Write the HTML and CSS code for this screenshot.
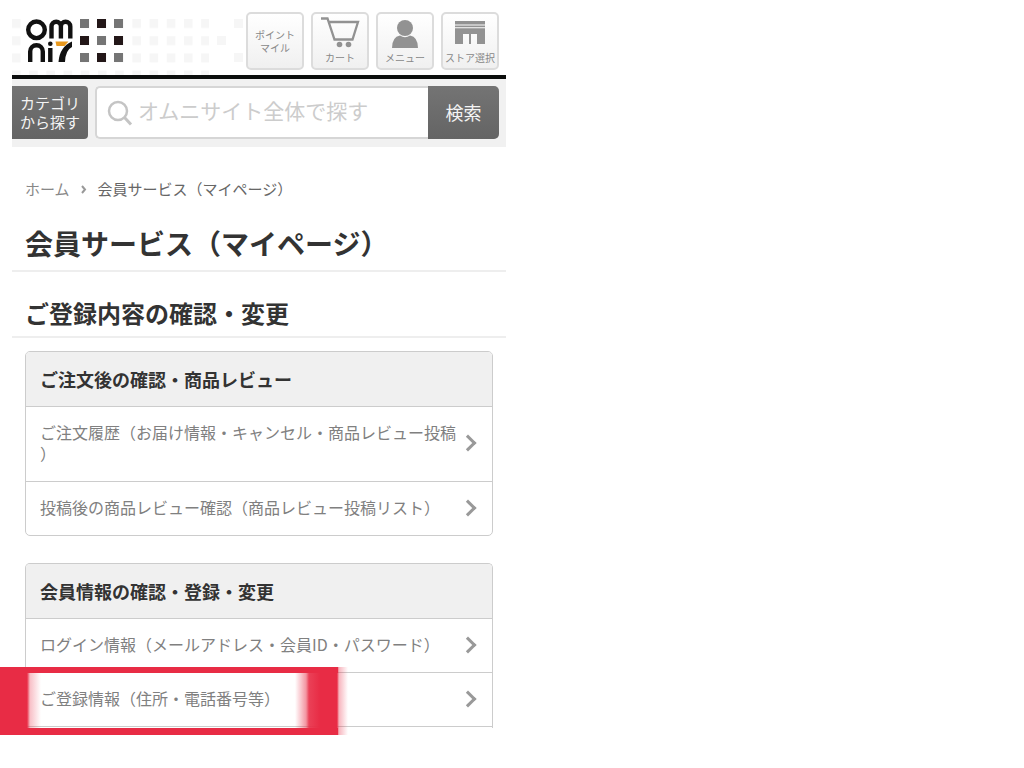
FILE: index.html
```html
<!DOCTYPE html>
<html lang="ja">
<head>
    <meta charset="UTF-8">
    <meta name="viewport" content="width=device-width, initial-scale=1.0">
    <title>会員サービス（マイページ）</title>
    <link rel="stylesheet" href="styles.css">
</head>
<body>
    <div class="page">
        <header class="header">
            <a class="logo" href="#" aria-label="omni7">
                <svg width="234" height="75" viewBox="12 0 234 75">
                    <defs>
                        <pattern id="dots" x="11" y="19" width="17.2" height="17.2" patternUnits="userSpaceOnUse">
                            <rect x="1" width="8.5" height="9" fill="#f6f6f6"/>
                        </pattern>
                    </defs>
                    <!-- tiled background -->
                    <rect x="12" y="19" width="197" height="56" fill="url(#dots)"/>
                    <path d="M217 36h9v9h-9zM234 19h9v9h-9zM234 53h9v9h-9z" fill="#f6f6f6"/>
                    <rect x="25" y="17" width="50" height="47" fill="#fff"/>
                    <path d="M80 19h9v9h-9zM114 19h9v9h-9zM97 36h9v9h-9zM80 53h9v9h-9zM114 53h9v9h-9z" fill="#757575"/>
                    <path d="M97 19h9v9h-9zM80 36h9v9h-9zM114 36h9v9h-9zM97 53h9v9h-9z" fill="#231718"/>
                    <!-- omni7 -->
                    <g fill="none" stroke="#111" stroke-width="4.4">
                        <circle cx="36.5" cy="29.8" r="8.3"/>
                        <path d="M51.5 38.5V26.5a4.700 4.700 0 0 1 9.400 0V38.500M60.900 26.500a4.700 4.700 0 0 1 9.400 0V38.500"/>
                        <path d="M30.200 62V51.500a6.200 6.200 0 0 1 12.600 0V62M50.300 48V62"/>
                    </g>
                    <circle cx="50.300" cy="43.800" r="2.300" fill="#111"/>
                    <path d="M55.500 41.500H68.500L64.500 46H56.500Z" fill="#e8981c"/>
                    <path d="M72 41.500V47Q65.500 50 65 62H58.500Q59.500 47 72 41.500Z" fill="#111"/>
                </svg>
            </a>
            <nav class="tools">
                <a class="tool" href="#"><span>ポイント<br>マイル</span></a>
                <a class="tool tool-icon" href="#">
                    <svg width="44" height="34" viewBox="0 0 44 34" fill="none" stroke="#929292" stroke-width="2.300">
                        <path d="M3 3.500H9.500L16.500 24.500H34.500L40 7H11"/>
                        <circle cx="21.500" cy="29.500" r="2.800" fill="#929292" stroke="none"/>
                        <circle cx="30.500" cy="29.500" r="2.800" fill="#929292" stroke="none"/>
                    </svg>
                    <span>カート</span>
                </a>
                <a class="tool tool-icon" href="#">
                    <svg width="44" height="34" viewBox="0 0 44 34" fill="#929292">
                        <circle cx="22" cy="13" r="8"/>
                        <path d="M9 33Q9 22 17 20.500Q22 24 27 20.500Q35 22 35 33Z"/>
                    </svg>
                    <span>メニュー</span>
                </a>
                <a class="tool tool-icon" href="#">
                    <svg width="44" height="34" viewBox="0 0 44 34" fill="#929292">
                        <path d="M7 6H37V9.500H7zM7 10.500H37V12.300H7zM7 13.300H37V29H29V19H23V29H21V19H15V29H7z"/>
                    </svg>
                    <span>ストア選択</span>
                </a>
            </nav>
        </header>

        <form class="search-bar">
            <button class="category" type="button">カテゴリ<br>から探す</button>
            <div class="search-box">
                <svg class="search-icon" width="26" height="26" viewBox="0 0 26 26" fill="none" stroke="#c4c4c4" stroke-width="2.500">
                    <circle cx="11" cy="11" r="9"/>
                    <path d="M17.500 17.500L24 24.500" stroke-width="3"/>
                </svg>
                <input type="text" class="search-input" aria-label="サイト内検索" placeholder="オムニサイト全体で探す">
                <button class="search-button" type="submit">検索</button>
            </div>
        </form>

        <nav class="breadcrumb">
            <a href="#">ホーム</a>
            <svg width="6" height="9" viewBox="0 0 6 9" fill="none" stroke="#999" stroke-width="2"><path d="M1 1L4 4.500L1 8"/></svg>
            <span>会員サービス（マイページ）</span>
        </nav>

        <main>
            <h1>会員サービス（マイページ）</h1>
            <h2>ご登録内容の確認・変更</h2>

            <section class="card">
                <h3>ご注文後の確認・商品レビュー</h3>
                <ul>
                    <li><a href="#">ご注文履歴（お届け情報・キャンセル・商品レビュー投稿）</a></li>
                    <li><a href="#">投稿後の商品レビュー確認（商品レビュー投稿リスト）</a></li>
                </ul>
            </section>

            <section class="card card-open">
                <h3>会員情報の確認・登録・変更</h3>
                <ul>
                    <li><a href="#">ログイン情報（メールアドレス・会員ID・パスワード）</a></li>
                    <li class="marked"><a href="#">ご登録情報（住所・電話番号等）</a></li>
                </ul>
            </section>
        </main>
    </div>
</body>
</html>
```
FILE: styles.css
```css
* {
    box-sizing: border-box;
}

body {
    font-family: "Noto Sans CJK JP", sans-serif;
    margin: 0;
    padding: 0 0 0 12px;
    background-color: #fff;
    color: #333;
}

a {
    color: inherit;
    text-decoration: none;
}

svg {
    display: block;
}

.page {
    max-width: 494px;
}

.header {
    display: flex;
    justify-content: space-between;
    align-items: flex-start;
    padding-right: 7px;
    border-bottom: 4px solid #0b0d0c;
}

.tools {
    display: flex;
    gap: 7px;
    padding-top: 12px;
}

.tool {
    display: flex;
    flex-direction: column;
    align-items: center;
    justify-content: center;
    width: 58px;
    height: 58px;
    border: 2px solid #dcdcdc;
    border-radius: 5px;
    background: linear-gradient(#fff, #f0f0f0);
    color: #888;
    font-size: 10px;
    line-height: 13px;
    text-align: center;
    white-space: nowrap;
}

.tool-icon {
    justify-content: space-between;
    padding: 1px 0 4px;
}

.search-bar {
    display: flex;
    gap: 7px;
    padding: 7px 7px 8px 0;
    background-color: #f1f1f1;
}

.category,
.search-button {
    border: none;
    background: linear-gradient(#747474, #646464);
    color: #f4f4f4;
    font-family: inherit;
    cursor: pointer;
}

.category {
    width: 76px;
    padding: 0 0 2px;
    border-radius: 0 4px 4px 0;
    font-size: 15px;
    line-height: 19px;
}

.search-box {
    display: flex;
    flex: 1;
    align-items: center;
    height: 53px;
    border: 2px solid #d6d6d6;
    border-right: none;
    border-radius: 5px;
    background-color: #fff;
}

.search-icon {
    flex: none;
    margin-left: 10px;
}

.search-input {
    flex: 1;
    min-width: 0;
    padding: 0 5px 6px;
    border: none;
    outline: none;
    background: none;
    font-family: inherit;
    font-size: 21px;
}

.search-input::placeholder {
    color: #ccc;
}

.search-button {
    align-self: stretch;
    width: 71px;
    margin: -2px 0;
    padding: 0 0 2px;
    border-radius: 0 5px 5px 0;
    font-size: 18px;
}

.breadcrumb {
    display: flex;
    align-items: center;
    gap: 11px;
    padding: 32px 13px 0;
    color: #666;
    font-size: 15px;
    line-height: 20px;
}

.breadcrumb a {
    color: #888;
}

h1,
h2,
h3 {
    margin: 0;
    font-weight: 700;
}

h1 {
    margin-top: 24px;
    padding: 0 13px 7px;
    border-bottom: 2px solid #eee;
    font-size: 28px;
    line-height: 40px;
}

h2 {
    margin-top: 26px;
    padding: 0 13px 8px;
    border-bottom: 2px solid #eee;
    font-size: 24px;
    line-height: 30px;
}

.card {
    margin: 13px 13px 27px;
    border: 1px solid #ccc;
    border-radius: 5px;
}

.card h3 {
    padding: 14px;
    border-radius: 4px 4px 0 0;
    background-color: #f0f0f0;
    font-size: 18px;
    line-height: 26px;
}

.card ul {
    margin: 0;
    padding: 0;
    list-style: none;
}

.card li {
    position: relative;
    border-top: 1px solid #ccc;
}

.card li a {
    display: flex;
    align-items: center;
    justify-content: space-between;
    padding: 15px 32px 17px 14px;
    color: #808080;
    font-size: 16px;
    line-height: 21px;
    line-break: anywhere;
}

/* chevron */
.card li a::after {
    content: "";
    position: absolute;
    right: 18px;
    width: 9px;
    height: 9px;
    border: solid #999;
    border-width: 3px 3px 0 0;
    transform: rotate(45deg);
}

.card-open {
    border-bottom: none;
    border-radius: 5px 5px 0 0;
}

.card-open ul {
    padding-bottom: 1px;
}

.card-open li:last-child {
    border-bottom: 1px solid #ccc;
}

/* red frame around the marked row */
.marked::after {
    content: "";
    position: absolute;
    top: -6px;
    left: -26px;
    width: 348px;
    height: 68px;
    pointer-events: none;
    background:
        linear-gradient(#e82c45, #e82c45) 0 0 / 338px 6px no-repeat,
        linear-gradient(#e82c45, #e82c45) 0 100% / 338px 7px no-repeat,
        linear-gradient(90deg, #e82c45 27px, rgba(232, 44, 69, 0.3) 30px, rgba(232, 44, 69, 0) 41px, rgba(232, 44, 69, 0) 295px, rgba(232, 44, 69, 0.5) 306px, rgba(232, 44, 69, 0.9) 309px, #e82c45 320px, #e82c45 337px, rgba(232, 44, 69, 0.35) 339px, rgba(232, 44, 69, 0) 348px);
}
```
